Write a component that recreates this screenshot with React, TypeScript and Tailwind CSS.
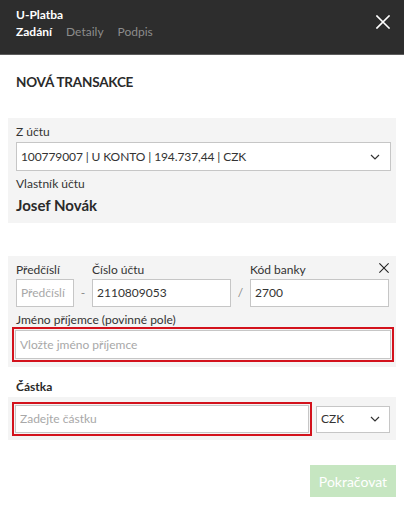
import React from "react";

const Chevron = () => (
  <svg width="10" height="6" viewBox="0 0 10 6" fill="none" stroke="#333" strokeWidth="1.2">
    <path d="M1 1 L5 5 L9 1" />
  </svg>
);

const CloseIcon = ({ size, color, sw }: { size: number; color: string; sw: number }) => (
  <svg width={size} height={size} viewBox="0 0 14 14" fill="none" stroke={color} strokeWidth={sw} strokeLinecap="square">
    <path d="M1 1 L13 13 M13 1 L1 13" />
  </svg>
);

export default function App() {
  return (
    <div className="w-[404px] h-[505px] bg-white text-[#333] overflow-hidden" style={{ fontFamily: "Lato, 'Noto Sans', sans-serif" }}>
      <div className="h-[55px] bg-[#2d2d2d] border-b border-[#5c5c5c] pl-4 pr-[14px] pt-[7px] flex justify-between">
        <div>
          <div className="text-[12px] font-bold leading-[16px] text-white">U-Platba</div>
          <div className="flex gap-[14px] text-[12px] leading-[16px] mt-[1px]">
            <span className="font-bold text-white">Zadání</span>
            <span className="text-[#8c8c8c]">Detaily</span>
            <span className="text-[#8c8c8c]">Podpis</span>
          </div>
        </div>
        <div className="pt-[8px]">
          <CloseIcon size={14} color="#fff" sw={1.6} />
        </div>
      </div>

      <div className="h-[63px] px-4 pt-[17px] text-[13.5px] font-bold tracking-[-0.2px] leading-[20px] text-[#2a2a2a]">NOVÁ TRANSAKCE</div>

      <div className="mx-2 bg-[#f4f4f4] pl-2 pr-[5px] pt-[6px] pb-[9px]">
        <div className="text-[12px] leading-[16px]">Z účtu</div>
        <div className="mt-[2px] h-[29px] bg-white border border-[#c6c6c6] flex items-center justify-between pl-[4px] pr-[10px] text-[12px]">
          <span className="tracking-[-0.1px]">100779007 | U KONTO | 194.737,44 | CZK</span>
          <Chevron />
        </div>
        <div className="mt-[5px] text-[12px] leading-[16px]">Vlastník účtu</div>
        <div className="mt-[4px] text-[15px] font-bold leading-[18px] text-[#2a2a2a]">Josef Novák</div>
      </div>

      <div className="relative mt-[33px] mx-2 bg-[#f4f4f4] pl-2 pr-[7px] pt-[6px] pb-[5px]">
        <div className="absolute right-[7px] top-[7px]">
          <CloseIcon size={10} color="#222" sw={1.5} />
        </div>
        <div className="grid grid-cols-[58px_18px_139px_19px_139px] text-[12px]">
          <div className="leading-[16px]">Předčíslí</div>
          <div />
          <div className="leading-[16px]">Číslo účtu</div>
          <div />
          <div className="leading-[16px]">Kód banky</div>
          <div className="mt-[1px] h-[28px] bg-white border border-[#c6c6c6] flex items-center pl-[4px] text-[#a8a8a8]">Předčíslí</div>
          <div className="mt-[1px] flex items-center justify-center text-[#888]">-</div>
          <div className="mt-[1px] h-[28px] bg-white border border-[#c6c6c6] flex items-center pl-[4px]">2110809053</div>
          <div className="mt-[1px] flex items-center justify-center text-[#888]">/</div>
          <div className="mt-[1px] h-[28px] bg-white border border-[#c6c6c6] flex items-center pl-[4px]">2700</div>
        </div>
        <div className="mt-[6px] text-[12px] leading-[14px]">Jméno příjemce (povinné pole)</div>
        <div className="-ml-[4px] -mr-[5px] border-2 border-[#d3121c] p-[1px]">
          <div className="h-[29px] bg-white border border-[#c6c6c6] flex items-center pl-[4px] text-[12px] text-[#a8a8a8]">Vložte jméno příjemce</div>
        </div>
      </div>

      <div className="mt-[13px] px-4 text-[12px] font-bold leading-[14px] text-[#2a2a2a]">Částka</div>

      <div className="mt-[3px] mx-2 bg-[#f4f4f4] pl-[4px] pr-[6px] pt-[5px] pb-[4px] flex items-center gap-[4px]">
        <div className="flex-1 border-2 border-[#d3121c] p-[1px]">
          <div className="h-[28px] bg-white border border-[#c6c6c6] flex items-center pl-[4px] text-[12px] text-[#a8a8a8]">Zadejte částku</div>
        </div>
        <div className="w-[74px] h-[27px] bg-white border border-[#c6c6c6] flex items-center justify-between pl-[4px] pr-[9px] text-[12px]">
          <span>CZK</span>
          <Chevron />
        </div>
      </div>

      <div className="mt-[25px] mr-2 flex justify-end">
        <div className="w-[86px] h-[32px] bg-[#c6e6c1] text-white text-[14px] flex items-center justify-center">Pokračovat</div>
      </div>
    </div>
  );
}
